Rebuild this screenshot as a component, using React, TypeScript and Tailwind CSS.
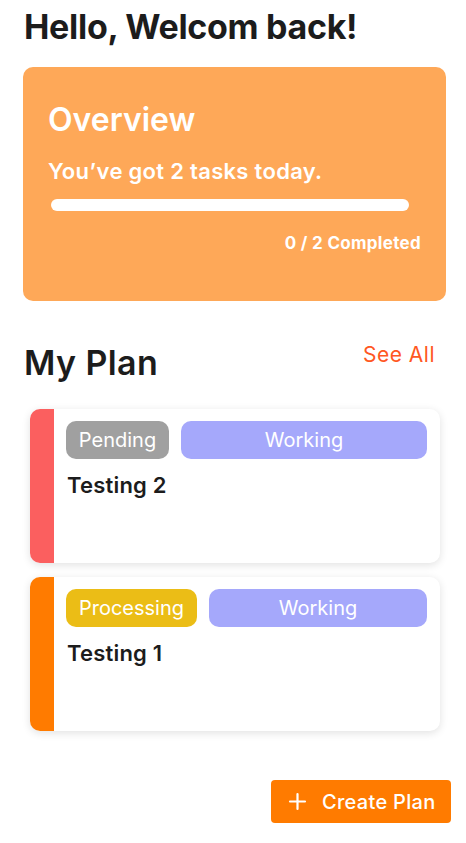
import React from "react";

const font = { fontFamily: "Inter, 'Noto Sans', sans-serif" };

function PlanCard({
  stripe,
  status,
  statusBg,
  statusW,
  title,
}: {
  stripe: string;
  status: string;
  statusBg: string;
  statusW: string;
  title: string;
}) {
  return (
    <div className="ml-[30px] w-[410px] h-[154px] flex rounded-[10px] bg-white shadow-[0_2px_8px_rgba(0,0,0,0.12)] overflow-hidden">
      <div className={`w-[24px] shrink-0 ${stripe}`} />
      <div className="flex-1 pt-[12px] pl-[12px] pr-[13px]">
        <div className="flex gap-[12px]">
          <div
            className={`${statusBg} ${statusW} h-[38px] rounded-[10px] flex items-center justify-center text-white text-[20px]`}
          >
            {status}
          </div>
          <div className="flex-1 h-[38px] rounded-[10px] bg-[#a5a8fb] flex items-center justify-center text-white text-[20px]">
            Working
          </div>
        </div>
        <div className="mt-[12px] pl-[1px] text-[22px] font-semibold text-[#1c1c1c] leading-[28px] tracking-[0.2px]">{title}</div>
      </div>
    </div>
  );
}

export default function App() {
  return (
    <div className="w-[466px] h-[843px] bg-white relative" style={font}>
      <div className="pl-[24px] pt-[7px] h-[67px]">
        <div className="text-[34px] font-bold text-[#1c1c1c] leading-[40px] tracking-[-0.3px]">
          Hello, Welcom back!
        </div>
      </div>
      <div className="ml-[23px] w-[423px] h-[234px] rounded-[10px] bg-[#fea858] pl-[25px] pr-[25px] pt-[31px] text-white">
        <div className="text-[32px] font-semibold leading-[44px]">Overview</div>
        <div className="mt-[15px] text-[22px] font-semibold leading-[28px] tracking-[0.3px]">You’ve got 2 tasks today.</div>
        <div className="mt-[14px] ml-[3px] w-[358px] h-[12px] rounded-full bg-white" />
        <div className="mt-[21px] text-right text-[17px] font-bold leading-[22px] tracking-[0.3px]">0 / 2 Completed</div>
      </div>
      <div className="mt-[40px] pl-[24px] pr-[31px] flex justify-between items-start h-[68px]">
        <div className="text-[34px] font-semibold text-[#1c1c1c] leading-[44px] tracking-[0.4px]">My Plan</div>
        <div className="text-[21px] text-[#ff5722] leading-[24px] mt-[2px] tracking-[0.5px]">See All</div>
      </div>
      <PlanCard stripe="bg-[#fb5f5f]" status="Pending" statusBg="bg-[#a0a0a0]" statusW="w-[103px]" title="Testing 2" />
      <div className="h-[14px]" />
      <PlanCard stripe="bg-[#ff7b00]" status="Processing" statusBg="bg-[#ebbd16]" statusW="w-[131px]" title="Testing 1" />
      <div className="flex justify-end pr-[15px] mt-[49px]">
        <button className="w-[180px] h-[43px] rounded-[4px] bg-[#ff7b00] text-white flex items-center pl-[17px] gap-[15px] text-[20px] font-medium tracking-[0.3px]">
          <svg width="19" height="19" viewBox="0 0 19 19" fill="none" stroke="white" strokeWidth="2.2" strokeLinecap="round">
            <path d="M9.5 2v15M2 9.5h15" />
          </svg>
          Create Plan
        </button>
      </div>
    </div>
  );
}
